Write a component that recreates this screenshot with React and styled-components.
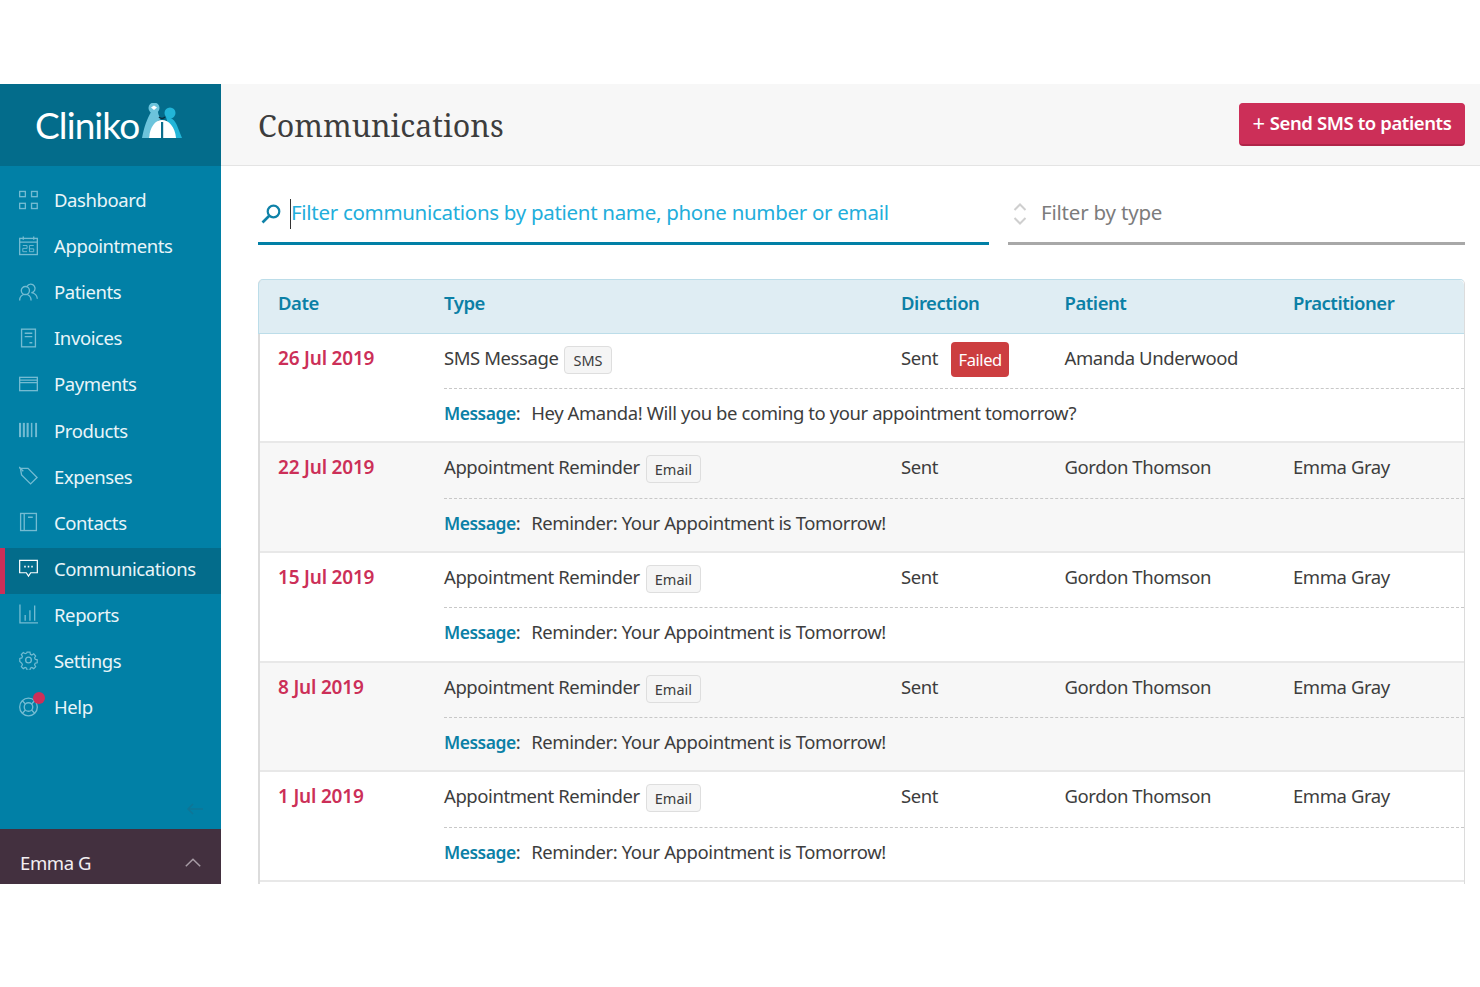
import React from "react";
import styled, { createGlobalStyle } from "styled-components";

const GlobalStyle = createGlobalStyle`
  html, body { margin: 0; padding: 0; background: #fff; }
  * { box-sizing: border-box; }
  body { font-family: "Noto Sans", "Liberation Sans", sans-serif; color: #3d3d3d; }
`;

const ic = { fill: "none", stroke: "#74bbd2", strokeWidth: 1.4 };

const DashboardIcon = () => (
  <svg width="20" height="20" viewBox="0 0 20 20" {...ic}>
    <rect x="0.7" y="1" width="6" height="5.5" /><rect x="13.2" y="1" width="6" height="5.5" />
    <rect x="0.7" y="13.5" width="6" height="5.5" /><rect x="13.2" y="13.5" width="6" height="5.5" />
  </svg>
);
const CalendarIcon = () => (
  <svg width="20" height="20" viewBox="0 0 20 20" {...ic}>
    <rect x="0.7" y="2" width="18.6" height="17" />
    <path d="M0.7 6h18.6M4.5 0v3.5M15.5 0v3.5" />
    <path d="M4 9.5h4.5v3H4v3.5h4.5M15.5 9.5H11v6.5h4.5v-3H11" strokeWidth="1" />
  </svg>
);
const PatientsIcon = () => (
  <svg width="20" height="20" viewBox="0 0 20 20" {...ic}>
    <circle cx="6.7" cy="8.5" r="4.3" />
    <path d="M0.7 19c0-4 2.5-6.500 6-6.500s6 2.500 6 6.500" />
    <path d="M8.500 4a4.500 4.500 0 1 1 4.500 6.700c3.500.3 6.300 3 6.300 6.500" />
  </svg>
);
const InvoiceIcon = () => (
  <svg width="20" height="20" viewBox="0 0 20 20" {...ic}>
    <rect x="2.7" y="0.7" width="14.6" height="18.6" />
    <path d="M6 5h8M6 8.500h8M11 15h3" />
  </svg>
);
const CardIcon = () => (
  <svg width="20" height="20" viewBox="0 0 20 20" {...ic}>
    <rect x="0.7" y="3" width="18.6" height="14" /><path d="M0.7 6h18.6M0.7 8.500h18.600" />
  </svg>
);
const BarcodeIcon = () => (
  <svg width="20" height="20" viewBox="0 0 20 20" fill="#74bbd2">
    <rect x="0" y="2.500" width="2.200" height="15" /><rect x="4" y="2.500" width="2.200" height="15" />
    <rect x="8" y="2.500" width="2.200" height="15" /><rect x="12.500" y="2.500" width="1.600" height="15" />
    <rect x="17" y="2.500" width="2" height="15" />
  </svg>
);
const TagIcon = () => (
  <svg width="20" height="20" viewBox="0 0 20 20" {...ic}>
    <path d="M1.500 2h8l9.500 9.500-6.800 6.800-9.500-9.500z" /><path d="M0 0.500l4.500 4.500" />
  </svg>
);
const ContactsIcon = () => (
  <svg width="20" height="20" viewBox="0 0 20 20" {...ic}>
    <rect x="1.700" y="1" width="16.600" height="18" /><path d="M5.500 1v18M9.500 5h5" />
  </svg>
);
const ChatIcon = () => (
  <svg width="20" height="20" viewBox="0 0 20 20" fill="none" stroke="#fff" strokeWidth="1.300">
    <path d="M0.700 2h18.600v13h-7l-2.300 3.500-2.300-3.500h-7z" />
    <path d="M5.500 8.500h1.600M9.200 8.500h1.600M12.900 8.500h1.600" strokeWidth="2" />
  </svg>
);
const ReportsIcon = () => (
  <svg width="20" height="20" viewBox="0 0 20 20" {...ic}>
    <path d="M1 0v19.300h19M6.500 11v6M11.500 6v11M16.500 1v16" />
  </svg>
);
const GearIcon = () => (
  <svg width="20" height="20" viewBox="0 0 20 20" {...ic}>
    <circle cx="10" cy="10" r="3" />
    <path d="M8.300 0.800h3.400l.5 2.500 1.700.8 2.200-1.300 2.300 2.500-1.300 2.100.7 1.800 2.400.600v3.400l-2.400.6-.7 1.800 1.300 2.100-2.300 2.400-2.200-1.300-1.700.8-.5 2.400H8.300l-.5-2.400-1.700-.8-2.200 1.300-2.300-2.400 1.300-2.100-.7-1.800L-.2 11.600V8.200l2.400-.6.7-1.800L1.600 3.700l2.300-2.400 2.200 1.300 1.700-.8z" transform="translate(1 1) scale(.9)" />
  </svg>
);
const HelpIcon = () => (
  <svg width="20" height="20" viewBox="0 0 20 20" {...ic}>
    <circle cx="10" cy="10" r="9.300" /><circle cx="10" cy="10" r="4.500" />
    <path d="M3.500 3.500l3.300 3.300M16.500 3.500l-3.300 3.300M3.500 16.500l3.300-3.300M16.500 16.500l-3.300-3.300" />
  </svg>
);

const navItems = [
  ["Dashboard", DashboardIcon], ["Appointments", CalendarIcon], ["Patients", PatientsIcon],
  ["Invoices", InvoiceIcon], ["Payments", CardIcon], ["Products", BarcodeIcon],
  ["Expenses", TagIcon], ["Contacts", ContactsIcon], ["Communications", ChatIcon],
  ["Reports", ReportsIcon], ["Settings", GearIcon], ["Help", HelpIcon],
];

const rows = [
  { date: "26 Jul 2019", type: "SMS Message", tag: "SMS", failed: true, patient: "Amanda Underwood", prac: "", msg: "Hey Amanda! Will you be coming to your appointment tomorrow?" },
  { date: "22 Jul 2019", type: "Appointment Reminder", tag: "Email", patient: "Gordon Thomson", prac: "Emma Gray", msg: "Reminder: Your Appointment is Tomorrow!" },
  { date: "15 Jul 2019", type: "Appointment Reminder", tag: "Email", patient: "Gordon Thomson", prac: "Emma Gray", msg: "Reminder: Your Appointment is Tomorrow!" },
  { date: "8 Jul 2019", type: "Appointment Reminder", tag: "Email", patient: "Gordon Thomson", prac: "Emma Gray", msg: "Reminder: Your Appointment is Tomorrow!" },
  { date: "1 Jul 2019", type: "Appointment Reminder", tag: "Email", patient: "Gordon Thomson", prac: "Emma Gray", msg: "Reminder: Your Appointment is Tomorrow!" },
];

export default function App() {
  return (
    <>
      <GlobalStyle />
      <Page>
        <Shell>
          <Sidebar>
            <LogoBar>
              <LogoText>Cliniko</LogoText>
              <svg width="40" height="38" viewBox="0 0 40 38">
                <circle cx="28" cy="10" r="5.500" fill="#22b5d8" />
                <path d="M24 14c7 0 10 5 12 11l4 10h-8l-6-14z" fill="#22b5d8" />
                <circle cx="12" cy="5" r="5.500" fill="#6cc4dc" />
                <path d="M9 9h7c0 3 2 5 3 7-6 3-10 10-12 19H0c2-11 5-19 9-26z" fill="#6cc4dc" />
                <path d="M9 4.500l3-2 3 2-3 2.500z" fill="#fff" />
                <path d="M7 35c1-11 6-18 13-18s13 7 14 18z" fill="#fff" />
                <path d="M17 14c2 2 4 2 6 0" fill="none" stroke="#0b2f3f" strokeWidth="1.500" />
                <rect x="19" y="19" width="2.200" height="16" fill="#0b6d8c" />
              </svg>
            </LogoBar>
            <Nav>
              {navItems.map(([label, Icon]) => (
                <NavItem key={label} $active={label === "Communications"}>
                  <NavIcon>
                    <Icon />
                    {label === "Help" && <HelpDot />}
                  </NavIcon>
                  {label}
                </NavItem>
              ))}
            </Nav>
            <Collapse>
              <svg width="16" height="12" viewBox="0 0 16 12" fill="none" stroke="#0f7596" strokeWidth="1.500">
                <path d="M6 1L1 6l5 5M1 6h15" />
              </svg>
            </Collapse>
            <UserBar>
              Emma G
              <svg width="16" height="9" viewBox="0 0 16 9" fill="none" stroke="#a79ca5" strokeWidth="1.500">
                <path d="M0.800 8.300L8 1.200l7.200 7.100" />
              </svg>
            </UserBar>
          </Sidebar>
          <Main>
            <Header>
              <Title>Communications</Title>
              <SendButton><Plus>+</Plus>Send SMS to patients</SendButton>
            </Header>
            <Content>
              <Filters>
                <SearchField>
                  <svg width="20" height="20" viewBox="0 0 20 20" fill="none" stroke="#0f82a8" strokeWidth="2.200">
                    <circle cx="12.500" cy="7.500" r="5.800" />
                    <path d="M8 12L1.500 18.500" strokeWidth="2.600" />
                  </svg>
                  <Caret />
                  <SearchText>Filter communications by patient name, phone number or email</SearchText>
                </SearchField>
                <TypeField>
                  <svg width="14" height="24" viewBox="0 0 14 24" fill="none" stroke="#cfcfcf" strokeWidth="2">
                    <path d="M1.500 8L7 2.500 12.500 8M1.500 16L7 21.500 12.500 16" />
                  </svg>
                  <TypeLabel>Filter by type</TypeLabel>
                </TypeField>
              </Filters>
              <Table>
                <HeadRow>
                  <HeadCell>Date</HeadCell>
                  <HeadCell>Type</HeadCell>
                  <HeadCell>Direction</HeadCell>
                  <HeadCell>Patient</HeadCell>
                  <HeadCell>Practitioner</HeadCell>
                </HeadRow>
                {rows.map((r, i) => (
                  <Row key={r.date} $shaded={i % 2 === 1}>
                    <DateCell>{r.date}</DateCell>
                    <RowBody>
                      <TopLine>
                        <Cell>{r.type}<Tag>{r.tag}</Tag></Cell>
                        <Cell>Sent{r.failed && <Failed>Failed</Failed>}</Cell>
                        <Cell>{r.patient}</Cell>
                        <Cell>{r.prac}</Cell>
                      </TopLine>
                      <MessageLine><MessageLabel>Message</MessageLabel>:<MessageText>{r.msg}</MessageText></MessageLine>
                    </RowBody>
                  </Row>
                ))}
              </Table>
            </Content>
          </Main>
        </Shell>
      </Page>
    </>
  );
}

const Page = styled.div`
  width: 1480px;
  height: 987px;
  padding-top: 84px;
  background: #fff;
  overflow: hidden;
`;
const Shell = styled.div`
  display: flex;
  height: 800px;
  overflow: hidden;
`;
const Sidebar = styled.aside`
  width: 221px;
  flex: none;
  display: flex;
  flex-direction: column;
  background: #0180a6;
`;
const LogoBar = styled.div`
  height: 82px;
  background: #036c8b;
  display: flex;
  align-items: center;
  gap: 3px;
  padding: 0 0 7px 35px;
`;
const LogoText = styled.span`
  font-family: "Lato", sans-serif;
  font-weight: 400;
  font-size: 37px;
  letter-spacing: -0.9px;
  color: #fff;
  margin-top: 6px;
`;
const Nav = styled.nav`
  padding-top: 13px;
  flex: 1;
`;
const NavItem = styled.div`
  height: 46.1px;
  display: flex;
  align-items: center;
  gap: 16px;
  padding: 0 0 5px ${(p) => (p.$active ? "14px" : "19px")};
  border-left: ${(p) => (p.$active ? "5px solid #cc2f58" : "none")};
  background: ${(p) => (p.$active ? "#036c8b" : "transparent")};
  color: #e9f5f9;
  font-size: 18.5px;
  letter-spacing: -0.4px;
`;
const NavIcon = styled.span`
  position: relative;
  width: 19px;
  height: 20px;
  display: flex;
  align-items: center;
`;
const HelpDot = styled.i`
  position: absolute;
  top: -5px;
  left: 14px;
  width: 12px;
  height: 12px;
  border-radius: 50%;
  background: #cc2f58;
`;
const Collapse = styled.div`
  display: flex;
  justify-content: flex-end;
  padding: 0 18px 14px 0;
`;
const UserBar = styled.div`
  height: 55px;
  padding: 12px 20px 0;
  background: #43303f;
  color: #f3eff2;
  font-size: 18.5px;
  letter-spacing: -0.4px;
  display: flex;
  justify-content: space-between;
  align-items: center;
`;
const Main = styled.main`
  flex: 1;
  min-width: 0;
`;
const Header = styled.header`
  height: 82px;
  background: #f7f7f7;
  border-bottom: 1px solid #e4e4e4;
  display: flex;
  justify-content: space-between;
  padding: 19px 15px 0 37px;
`;
const Title = styled.h1`
  margin: 1px 0 0;
  font-family: "Noto Serif", "DejaVu Serif", "Liberation Serif", serif;
  font-weight: 400;
  font-size: 30.4px;
  line-height: 44px;
  color: #3d3d3d;
`;
const SendButton = styled.button`
  width: 226px;
  height: 43px;
  border: 1px solid #cc2f58;
  border-bottom: 2px solid #b02549;
  border-radius: 4px;
  background: #cc2f58;
  color: #fff;
  font-family: inherit;
  font-weight: 600;
  font-size: 18.5px;
  letter-spacing: -0.4px;
  padding: 0 0 4px;
  white-space: nowrap;
  display: flex;
  align-items: center;
  justify-content: center;
`;
const Plus = styled.span`
  font-weight: 400;
  font-size: 22px;
  margin-right: 5px;
`;
const Content = styled.div`
  padding: 24px 15px 0 37px;
`;
const Filters = styled.div`
  display: grid;
  grid-template-columns: 731px 1fr;
  gap: 19px;
`;
const SearchField = styled.div`
  height: 55px;
  border-bottom: 3px solid #0180a6;
  display: flex;
  align-items: center;
  padding: 0 0 5px 3px;
`;
const Caret = styled.i`
  width: 1px;
  height: 30px;
  background: #333;
  margin: 0 0 0 9px;
`;
const SearchText = styled.span`
  font-size: 20.5px;
  letter-spacing: -0.3px;
  color: #22aedb;
  white-space: nowrap;
  padding-bottom: 4px;
`;
const TypeField = styled.div`
  height: 55px;
  border-bottom: 3px solid #a8a8a8;
  display: flex;
  align-items: center;
  gap: 14px;
  padding: 0 0 5px 5px;
  font-size: 20.5px;
  letter-spacing: -0.2px;
  color: #7c7c7c;
`;
const TypeLabel = styled.span`
  padding-bottom: 4px;
`;
const Table = styled.section`
  margin-top: 34px;
  min-height: 640px;
  border: 1px solid #bcdde9;
  border-left: 2px solid #dcdcdc;
  border-right: 1px solid #dcdcdc;
  border-bottom: none;
  border-radius: 5px 5px 0 0;
  font-size: 18.5px;
  letter-spacing: -0.42px;
`;
const HeadRow = styled.div`
  height: 53.5px;
  margin-left: -2px;
  padding-bottom: 7px;
  display: grid;
  grid-template-columns: 185px 457px 163.500px 228.500px 1fr;
  align-items: center;
  background: #dfedf3;
  border: 1px solid #bcdde9;
  border-width: 0 0 1px 1px;
  border-radius: 5px 5px 0 0;
`;
const HeadCell = styled.div`
  font-weight: 600;
  letter-spacing: -0.45px;
  color: #0b80a6;
  &:first-child { padding-left: 19px; }
`;
const Row = styled.div`
  height: 109.700px;
  display: grid;
  grid-template-columns: 184px 1fr;
  background: ${(p) => (p.$shaded ? "#f7f7f7" : "#fff")};
  border-bottom: 2px solid #e8e8e8;
`;
const DateCell = styled.div`
  padding: 11px 0 0 18px;
  font-size: 19px;
  letter-spacing: -0.2px;
  font-weight: 600;
  color: #cc2f58;
`;
const RowBody = styled.div`
  display: flex;
  flex-direction: column;
`;
const TopLine = styled.div`
  height: 55.5px;
  display: grid;
  grid-template-columns: 457px 163.500px 228.500px 1fr;
  padding-top: 11px;
  border-bottom: 1px dashed #c8c8c8;
`;
const Cell = styled.div`
  display: flex;
  align-items: flex-start;
  white-space: nowrap;
`;
const Tag = styled.span`
  margin: 1px 0 0 6px;
  height: 28px;
  padding: 0 8px;
  display: flex;
  align-items: center;
  border: 1px solid #dedede;
  border-radius: 4px;
  background: #f5f5f5;
  font-size: 14.5px;
  letter-spacing: 0;
`;
const Failed = styled.span`
  margin: -3px 0 0 13px;
  height: 35px;
  padding: 0 7.5px;
  display: flex;
  align-items: center;
  border-radius: 4px;
  background: #cc3e40;
  color: #fff;
  font-size: 16.5px;
`;
const MessageLine = styled.div`
  padding-top: 11px;
`;
const MessageLabel = styled.span`
  font-weight: 600;
  font-size: 17.5px;
  letter-spacing: -0.5px;
  color: #0b80a6;
`;
const MessageText = styled.span`
  margin-left: 11px;
`;
